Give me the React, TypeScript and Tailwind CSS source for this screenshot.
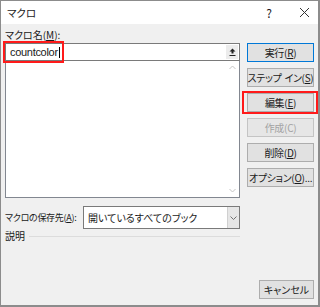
const font = "font-['Noto_Sans_CJK_JP','Liberation_Sans',sans-serif] [font-feature-settings:'palt']";

const Btn = ({ label, accel, rest = "", primary = false, disabled = false, mark = false }: { label: React.ReactNode; accel: string; rest?: string; primary?: boolean; disabled?: boolean; mark?: boolean }) => (
  <div className="relative">
    <button
      className={`w-[67px] h-[19px] flex items-center justify-center whitespace-nowrap text-[10px] tracking-[-0.3px] leading-none bg-[#e1e1e1] border ${
        primary ? "border-[#0078d7]" : disabled ? "border-[#c4c4c4] bg-[#e6e6e6]" : "border-[#adadad]"
      } ${disabled ? "text-[#a3a3a3]" : "text-[#1a1a1a]"}`}
    >
      {label}(<span className={disabled ? "" : "underline underline-offset-1"}>{accel}</span>){rest}
    </button>
    {mark && <div className="absolute -left-[5px] -top-[2px] w-[76px] h-[23px] border-2 border-[#ff1a1a]" />}
  </div>
);

export default function App() {
  return (
    <div className={`w-[320px] h-[307px] bg-[#f0f0f0] border border-[#8c8c8c] border-r-2 border-b-2 flex flex-col text-[#1a1a1a] ${font}`}>
      {/* title bar */}
      <div className="h-[23px] bg-white flex items-center pl-[6px] shrink-0">
        <span className="text-[10.5px] flex-1">マクロ</span>
        <span className="text-[12px] mr-[27px]">?</span>
        <svg width="11" height="11" viewBox="0 0 11 11" className="mr-[8px]">
          <path d="M1 1L10 10M10 1L1 10" stroke="#333" strokeWidth="1" />
        </svg>
      </div>

      <div className="flex flex-1">
        {/* left column */}
        <div className="w-[239px] pl-[4px] flex flex-col">
          <div className="h-[19px] pt-[4px] text-[10px] leading-[14px] whitespace-nowrap">
            マクロ名(<span className="underline underline-offset-1">M</span>):
          </div>
          <div className="relative h-[18px] bg-white border border-[#7a7a7a] flex items-center">
            <span className="pl-[4px] text-[11px] font-['Liberation_Sans',sans-serif] [font-feature-settings:normal] tracking-[-0.3px]">
              countcolor<span className="inline-block w-px h-[11px] bg-black align-middle ml-px" />
            </span>
            <div className="absolute right-[1px] top-[1px] w-[12px] h-[14px] bg-[#ececec] flex items-center justify-center">
              <svg width="7" height="8" viewBox="0 0 7 8">
                <path d="M3.5 0.5L0.5 3.5H2.5V5.5H4.5V3.5H6.5Z" fill="#222" />
                <path d="M0.5 7.5H6.5" stroke="#222" strokeWidth="1" />
              </svg>
            </div>
            <div className="absolute -left-[3px] -top-[3px] w-[61px] h-[22px] border-2 border-[#ff1a1a]" />
          </div>
          <div className="h-[137px] bg-white border border-[#828790] border-t-0 flex justify-end">
            <div className="w-[13px] flex flex-col items-center justify-between py-[4px]">
              <svg width="7" height="5" viewBox="0 0 7 5">
                <path d="M0.5 4L3.5 1L6.5 4" fill="none" stroke="#c4c4c4" strokeWidth="1" />
              </svg>
              <svg width="7" height="5" viewBox="0 0 7 5">
                <path d="M0.5 1L3.5 4L6.5 1" fill="none" stroke="#c4c4c4" strokeWidth="1" />
              </svg>
            </div>
          </div>

          <div className="flex items-center mt-[8px]">
            <span className="w-[78px] text-[9px] tracking-[-0.3px] leading-none whitespace-nowrap">
              マクロの保存先(<span className="underline underline-offset-1">A</span>):
            </span>
            <div className="flex-1 h-[23px] bg-white border border-[#7a7a7a] flex items-center">
              <span className="flex-1 pl-[4px] text-[10px] whitespace-nowrap">開いているすべてのブック</span>
              <div className="w-[12px] h-full bg-[#e6e6e6] border-l border-[#d0d0d0] flex items-center justify-center">
                <svg width="7" height="4" viewBox="0 0 7 4">
                  <path d="M0.5 0.5L3.5 3.5L6.5 0.5" fill="none" stroke="#707070" strokeWidth="1" />
                </svg>
              </div>
            </div>
          </div>

          <div className="flex items-center mt-[1px] h-[12px]">
            <span className="text-[10px] leading-none mr-[4px] whitespace-nowrap">説明</span>
            <div className="flex-1 h-px bg-[#dcdcdc]" />
          </div>
        </div>

        {/* right column */}
        <div className="flex-1 flex flex-col pl-[7px] pt-[19px] pr-[4px]">
          <div className="flex flex-col gap-[6px]">
            <Btn label="実行" accel="R" primary />
            <Btn label={<>ステップ<span className="ml-[3px]">イン</span></>} accel="S" />
            <Btn label="編集" accel="E" mark />
            <Btn label="作成" accel="C" disabled />
            <Btn label="削除" accel="D" />
            <Btn label="オプション" accel="O" rest="..." />
          </div>
          <div className="mt-auto mb-[6px] flex justify-end">
            <button className="w-[55px] h-[19px] text-[10px] leading-none whitespace-nowrap bg-[#e1e1e1] border border-[#adadad]">
              キャンセル
            </button>
          </div>
        </div>
      </div>
    </div>
  );
}
